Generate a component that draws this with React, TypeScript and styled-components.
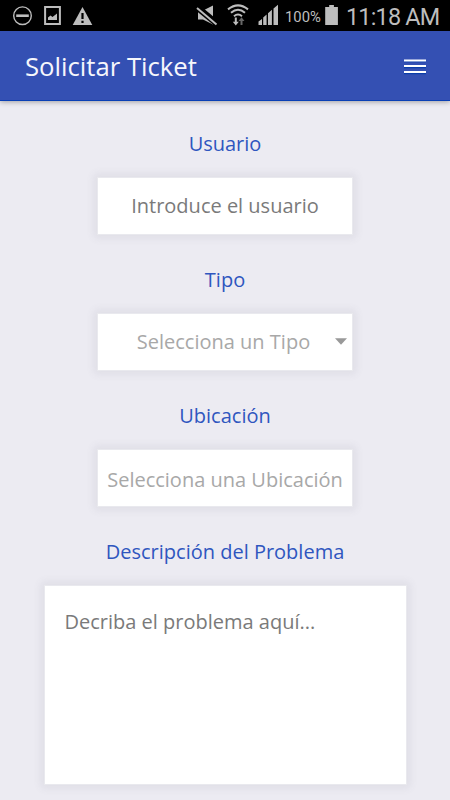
import React from 'react';
import styled, { createGlobalStyle } from 'styled-components';

const GlobalStyle = createGlobalStyle`
  * { box-sizing: border-box; }
  body { margin: 0; background: #ecebf2; font-family: 'Open Sans', sans-serif; }
`;

const Screen = styled.div`
  width: 450px;
  height: 800px;
  overflow: hidden;
  display: flex;
  flex-direction: column;
  background: #ecebf2;
`;

const StatusBar = styled.div`
  height: 31px;
  flex: none;
  display: flex;
  justify-content: space-between;
  background: #000;
  color: #bdbdbd;
  font-family: Roboto, sans-serif;
`;

const StatusGroup = styled.div`
  display: flex;
  height: 31px;
`;

const BatteryLevel = styled.span`
  width: 40px;
  margin-left: 6px;
  font-size: 14.8px;
  line-height: 34px;
  white-space: nowrap;
`;

const Clock = styled.span`
  width: 103px;
  margin-left: 7px;
  margin-right: 1px;
  font-size: 23.4px;
  letter-spacing: -0.8px;
  line-height: 35px;
  white-space: nowrap;
`;

const Header = styled.header`
  height: 70px;
  flex: none;
  display: flex;
  align-items: center;
  justify-content: space-between;
  padding: 0 23px 0 25px;
  background: #3450b3;
  border-bottom: 1px solid #0a3fb5;
  box-shadow: 0 1px 5px rgba(0, 0, 0, 0.32);
`;

const Title = styled.h1`
  margin: 0;
  padding-top: 3px;
  color: #f6f7fc;
  font-size: 25.7px;
  font-weight: 400;
  line-height: 34px;
  white-space: nowrap;
`;

const MenuButton = styled.button`
  display: flex;
  padding: 0;
  border: 0;
  background: none;
`;

const Form = styled.form`
  display: flex;
  flex-direction: column;
  align-items: center;
  gap: 22px;
  padding-top: 28px;
`;

const Field = styled.div`
  display: flex;
  flex-direction: column;
  align-items: center;
`;

const Label = styled.label`
  height: 48px;
  color: #2f56bf;
  font-size: 20px;
  font-weight: 400;
  line-height: 30px;
  white-space: nowrap;
`;

const Box = styled.div<{ $muted?: boolean; $drop?: number }>`
  width: 256px;
  height: 58px;
  margin-bottom: 8px;
  display: grid;
  grid-template-columns: 1fr;
  align-items: center;
  justify-items: center;
  padding-top: ${(p) => Math.max(p.$drop ?? 0, 0)}px;
  padding-bottom: ${(p) => Math.max(-(p.$drop ?? 0), 0)}px;
  border: 1px solid #e9e9ee;
  background: #fff;
  color: ${(p) => (p.$muted ? '#a8a8a8' : '#7a7a7a')};
  box-shadow: 0 0 8px 3px rgba(90, 90, 110, 0.09);
  font-size: 20px;
  font-weight: 400;
  white-space: nowrap;
`;

const SelectBox = styled(Box)`
  grid-template-columns: 1fr 12px;
  padding-right: 5px;
  padding-left: 14px;
`;

const TextArea = styled(Box)`
  width: 363px;
  height: 200px;
  align-items: start;
  justify-items: start;
  padding: 22px 20px;
  line-height: 28px;
`;

function Notifications() {
  return (
    <svg width="110" height="31" viewBox="0 0 110 31" fill="none" stroke="#bdbdbd">
      <circle cx="22.5" cy="15.7" r="8.8" strokeWidth="1.4" />
      <path d="M16.2 15.7h12.6" strokeWidth="2.6" />
      <path d="M45.1 7.1h14.8v16.8H45.1z" strokeWidth="2" />
      <path d="M48 20v-2.5l2.5-2 2 1.5 4.5-3.6V20z" fill="#bdbdbd" stroke="none" />
      <path d="M82.5 7L92.3 25H72.7z" fill="#bdbdbd" stroke="none" />
      <path d="M82.5 13v6M82.5 20.7v2.2" stroke="#000" strokeWidth="2.2" />
    </svg>
  );
}

function Signals() {
  return (
    <svg width="84" height="31" viewBox="195 0 84 31" fill="#bdbdbd">
      <path d="M198 10.5h5l10-5v19L203 19.5h-5z" />
      <path d="M197 5.5L217 22.3" stroke="#000" strokeWidth="4.2" />
      <path d="M197 8.6L216.5 24.6" stroke="#000" strokeWidth="4.5" />
      <path d="M197 8L216.5 24.4" stroke="#bdbdbd" strokeWidth="2" />
      <g fill="none" stroke="#bdbdbd" strokeWidth="2">
        <path d="M228 9.4Q238 1.4 248 9.4M231 12.8q7-6 14 0M234 16.2q4-3.5 8 0" />
      </g>
      <path d="M234.8 17.5h2v4.2h2L235.8 25.5l-3-3.8h2z" />
      <path d="M242.5 25h-2v-4h-2l3-3.8 3 3.8h-2z" fill="#666" />
      <path d="M258.5 25v-3.6l3.5-2.4v6zM263.2 25v-7.6l3.4-2.9V25zM268 25V13.3l3.9-3.6V25zM273.5 25V8.6l4.5-3.8V25z" />
    </svg>
  );
}

function Battery() {
  return (
    <svg width="14" height="31" viewBox="0 0 14 31" fill="#bdbdbd">
      <path d="M.2 7h4V5.1h4.7V7h4v18H.2z" />
    </svg>
  );
}

function MenuIcon() {
  return (
    <svg width="24" height="18" viewBox="0 0 24 18">
      <path d="M1 4.5h22M1 10.5h22M1 16.5h22" stroke="#0b3da9" strokeWidth="1.6" />
      <path d="M1 3.5h22M1 9h22M1 15h22" stroke="#fff" strokeWidth="1.8" />
    </svg>
  );
}

function Caret() {
  return (
    <svg width="12" height="7" viewBox="0 0 12 7">
      <path d="M0 .2h12L6 6.8z" fill="#999" />
    </svg>
  );
}

export default function App() {
  return (
    <Screen>
      <GlobalStyle />
      <StatusBar>
        <StatusGroup>
          <Notifications />
        </StatusGroup>
        <StatusGroup>
          <Signals />
          <BatteryLevel>100%</BatteryLevel>
          <Battery />
          <Clock>11:18 AM</Clock>
        </StatusGroup>
      </StatusBar>
      <Header>
        <Title>Solicitar Ticket</Title>
        <MenuButton type="button" aria-label="Menú"><MenuIcon /></MenuButton>
      </Header>
      <Form>
        <Field>
          <Label>Usuario</Label>
          <Box $drop={-1}>Introduce el usuario</Box>
        </Field>
        <Field>
          <Label>Tipo</Label>
          <SelectBox $muted $drop={-2}>Selecciona un Tipo<Caret /></SelectBox>
        </Field>
        <Field>
          <Label>Ubicación</Label>
          <Box $muted $drop={3}>Selecciona una Ubicación</Box>
        </Field>
        <Field>
          <Label>Descripción del Problema</Label>
          <TextArea>Decriba el problema aquí...</TextArea>
        </Field>
      </Form>
    </Screen>
  );
}
